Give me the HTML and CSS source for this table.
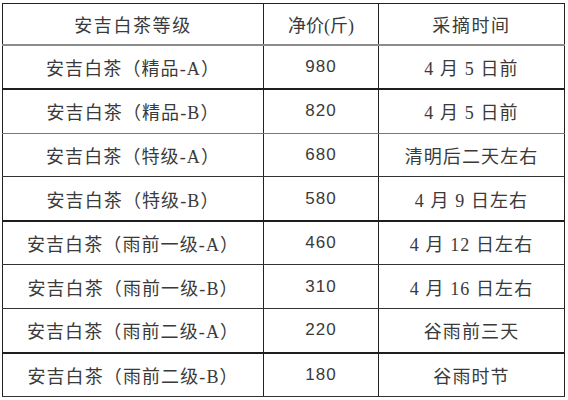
FILE: index.html
```html
<!DOCTYPE html>
<html lang="zh-CN">
<head>
<meta charset="utf-8">
<title>安吉白茶价格表</title>
<link rel="stylesheet" href="styles.css">
</head>
<body>
<table class="price-table">
  <colgroup>
    <col class="c-grade">
    <col class="c-price">
    <col class="c-time">
  </colgroup>
  <thead>
    <tr class="head">
      <th>安吉白茶等级</th>
      <th class="price-head">净价(斤)</th>
      <th>采摘时间</th>
    </tr>
  </thead>
  <tbody>
    <tr class="thick"><td>安吉白茶（精品-A）</td><td class="num">980</td><td>4 月 5 日前</td></tr>
    <tr class="thin"><td>安吉白茶（精品-B）</td><td class="num">820</td><td>4 月 5 日前</td></tr>
    <tr><td>安吉白茶（特级-A）</td><td class="num">680</td><td>清明后二天左右</td></tr>
    <tr class="thick"><td>安吉白茶（特级-B）</td><td class="num">580</td><td>4 月 9 日左右</td></tr>
    <tr><td>安吉白茶（雨前一级-A）</td><td class="num">460</td><td>4 月 12 日左右</td></tr>
    <tr><td>安吉白茶（雨前一级-B）</td><td class="num">310</td><td>4 月 16 日左右</td></tr>
    <tr class="thick"><td>安吉白茶（雨前二级-A）</td><td class="num">220</td><td>谷雨前三天</td></tr>
    <tr><td>安吉白茶（雨前二级-B）</td><td class="num">180</td><td>谷雨时节</td></tr>
  </tbody>
</table>
</body>
</html>
```

FILE: styles.css
```css
html, body {
  margin: 0;
  padding: 0;
  background: #ffffff;
}

body {
  padding: 3px 0 0 2px;
  font-family: "Liberation Serif", "Noto Sans CJK SC", serif;
  color: #3a3a3a;
}

.price-table {
  border-collapse: collapse;
  table-layout: fixed;
  width: 562px;
  border: 1px solid #222;
}

.c-grade { width: 261px; }
.c-price { width: 115px; }
.c-time  { width: 186px; }

.price-table th,
.price-table td {
  border-left: 1px solid #222;
  border-right: 1px solid #222;
  border-bottom: 1px solid #333;
  padding: 0;
  text-align: center;
  vertical-align: middle;
  font-weight: normal;
  font-size: 18px;
  letter-spacing: 1.1px;
  white-space: nowrap;
}

.head th {
  height: 39.5px;
  letter-spacing: 1.6px;
  border-bottom: 2px solid #8c8c8c;
}

.head .price-head {
  letter-spacing: 0;
}

.price-table td {
  height: 42.6px;
}

.price-table tr.thick td {
  border-bottom: 2px solid #1e1e1e;
}

.price-table tr.thin td {
  border-bottom: 1px solid #777;
}

.price-table td.num {
  font-family: "Liberation Sans", "Noto Sans CJK SC", sans-serif;
  font-size: 17px;
  letter-spacing: 1px;
}
```
